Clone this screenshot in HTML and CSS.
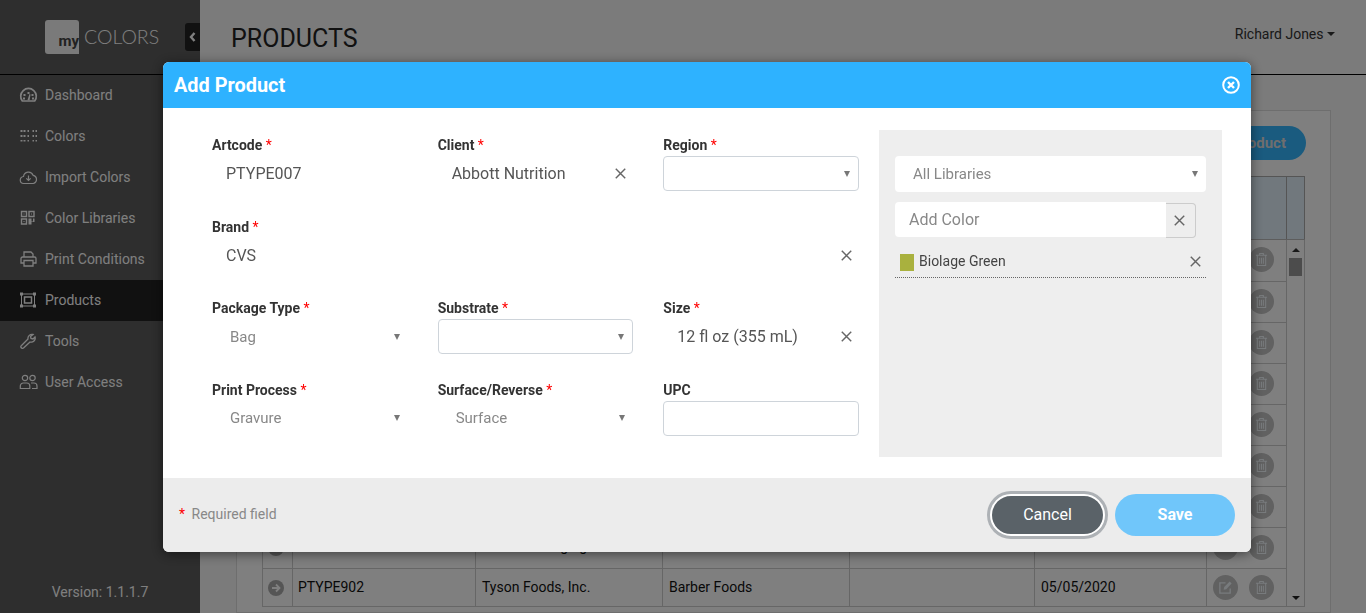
FILE: index.html
```html
<!DOCTYPE html>
<html lang="en">
<head>
<meta charset="utf-8" />
<title>myColors - Products</title>
<link rel="stylesheet" href="styles.css">
</head>
<body>

<svg class="defs" width="0" height="0">
    <symbol id="trash" viewBox="0 0 14 16">
        <path d="M1 3.500h12M5 3.500V1.500h4v2M2.500 3.500v11h9v-11M5 6v6.500M7 6v6.500M9 6v6.500" fill="none" stroke="currentColor" stroke-width="1.100"/>
    </symbol>
    <symbol id="edit" viewBox="0 0 16 16">
        <path d="M13 9v5H2V3h6" fill="none" stroke="currentColor" stroke-width="1.400"/>
        <path d="M6 10.500l.6-3L12.500 1.600l2 2L8.800 9.800z" fill="currentColor"/>
    </symbol>
    <symbol id="clear" viewBox="0 0 10 10">
        <path d="M.7.7l8.600 8.600M9.300.7L.7 9.300" fill="none" stroke="currentColor" stroke-width="1.300"/>
    </symbol>
</svg>

<div class="app">

    <!-- sidebar: -->
    <aside class="sidebar">
        <div class="brand">
            <div class="logo-box">my</div>
            <div class="logo-name">COLORS</div>
            <div class="collapse">
                <svg width="7" height="10" viewBox="0 0 7 10"><path d="M5.500 1L2 5l3.500 4" fill="none" stroke="#fff" stroke-width="2.400"/></svg>
            </div>
        </div>
        <ul class="nav">
            <li>
                <svg class="nav-ico" viewBox="0 0 18 16"><path d="M2.800 14a7.800 7.800 0 1 1 12.400 0z" fill="none" stroke="currentColor" stroke-width="1.700"/><path d="M8 5h2v2H8zM4 7h2v2H4zM12 7h2v2h-2zM3.500 10.500h2v2h-2zM12.500 10.500h2v2h-2zM8 13l2-6 1 .4-1 6z" fill="currentColor"/></svg>
                Dashboard
            </li>
            <li>
                <svg class="nav-ico" viewBox="0 0 18 16" fill="currentColor"><rect x="1" y="2" width="2" height="2"/><rect x="4" y="2" width="2" height="2"/><rect x="8" y="2" width="1.500" height="2"/><rect x="13" y="2" width="1.500" height="2"/><rect x="16" y="2" width="1.500" height="2"/><rect x="1" y="7" width="2" height="2"/><rect x="4" y="7" width="2" height="2"/><rect x="8" y="7" width="1.500" height="2"/><rect x="13" y="7" width="1.500" height="2"/><rect x="16" y="7" width="1.500" height="2"/><rect x="1" y="12" width="2" height="1.500"/><rect x="4" y="12" width="2" height="1.500"/><rect x="8" y="12" width="1.500" height="1.500"/><rect x="13" y="12" width="1.500" height="1.500"/><rect x="16" y="12" width="1.500" height="1.500"/></svg>
                Colors
            </li>
            <li>
                <svg class="nav-ico" viewBox="0 0 18 16"><path d="M4.500 14.500a3.500 3.500 0 0 1-.5-7 5 5 0 0 1 9.600-1.200 4.200 4.200 0 0 1 .2 8.200z M9 6.500v5M6.800 9.300L9 11.500l2.200-2.200" fill="none" stroke="currentColor" stroke-width="1.200"/></svg>
                Import Colors
            </li>
            <li>
                <svg class="nav-ico" viewBox="0 0 18 16"><path d="M2 1.500h5v5H2zM9.500 1.500h5v5h-5zM2 9h5v5H2z" fill="none" stroke="currentColor" stroke-width="1.400"/><path d="M4 3.500h1v1H4zM11.500 3.500h1v1h-1zM4 11h1v1H4zM9 8.500h3v3h1.500v-3H15v3.500h-3v2.500H9z" fill="currentColor"/></svg>
                Color Libraries
            </li>
            <li>
                <svg class="nav-ico" viewBox="0 0 18 16"><path d="M4.500 6V1h7l2 2v3M4.500 12H1.500V7.500A1.500 1.500 0 0 1 3 6h12a1.500 1.500 0 0 1 1.500 1.500V12h-3M4.500 9.500h9v5.500h-9z" fill="none" stroke="currentColor" stroke-width="1.300"/></svg>
                Print Conditions
            </li>
            <li class="active">
                <svg class="nav-ico" viewBox="0 0 18 16"><path d="M2 2h13v12H2z" fill="none" stroke="currentColor" stroke-width="1"/><path d="M5 5h7v6H5z" fill="none" stroke="currentColor" stroke-width="1.500"/><path d="M.5.5h3v3h-3zM13.500.5h3v3h-3zM.5 12.500h3v3h-3zM13.500 12.500h3v3h-3z" fill="currentColor"/></svg>
                Products
            </li>
            <li>
                <svg class="nav-ico" viewBox="0 0 18 16"><path d="M2 12.500l6.500-6.500a4 4 0 0 1 5-4.500l-2.500 2 .5 2 2 .5 2-2a4 4 0 0 1-5 5L4 15a1.400 1.400 0 0 1-2-2.500z" fill="none" stroke="currentColor" stroke-width="1.300"/></svg>
                Tools
            </li>
            <li>
                <svg class="nav-ico" viewBox="0 0 18 16"><circle cx="5.500" cy="4" r="2.700" fill="none" stroke="currentColor" stroke-width="1.200"/><circle cx="13" cy="4" r="2.700" fill="none" stroke="currentColor" stroke-width="1.200"/><path d="M.8 14.500v-2.500a3 3 0 0 1 3-3h3.500a3 3 0 0 1 3 3v2.500zM11.500 9h3a3 3 0 0 1 3 3v2.500h-5" fill="none" stroke="currentColor" stroke-width="1.200"/></svg>
                User Access
            </li>
        </ul>
        <div class="version">Version: 1.1.1.7</div>
    </aside>

    <!-- page behind the modal: -->
    <main class="main">
        <header class="topbar">
            <h1>PRODUCTS</h1>
            <div class="user">Richard Jones <span class="caret"></span></div>
        </header>
        <section class="card">
            <div class="card-tools"><button class="btn-add">Add Product</button></div>
            <table class="grid">
                <colgroup>
                    <col class="c-go"><col class="c-code"><col class="c-client"><col class="c-brand"><col class="c-type"><col class="c-date"><col class="c-act"><col class="c-scroll">
                </colgroup>
                <tr class="head"><th></th><th></th><th></th><th></th><th></th><th></th><th></th><th></th></tr>
                <tr class="first">
                    <td></td><td></td><td></td><td></td><td></td><td></td>
                    <td class="act"><span class="round"></span><span class="round"><svg class="i-trash"><use href="#trash"/></svg></span></td>
                    <td class="scroll" rowspan="8">
                        <div class="scroll-box"><span class="up"></span><span class="thumb"></span></div>
                    </td>
                </tr>
                <tr><td></td><td></td><td></td><td></td><td></td><td></td><td class="act"><span class="round"></span><span class="round"><svg class="i-trash"><use href="#trash"/></svg></span></td></tr>
                <tr><td></td><td></td><td></td><td></td><td></td><td></td><td class="act"><span class="round"></span><span class="round"><svg class="i-trash"><use href="#trash"/></svg></span></td></tr>
                <tr><td></td><td></td><td></td><td></td><td></td><td></td><td class="act"><span class="round"></span><span class="round"><svg class="i-trash"><use href="#trash"/></svg></span></td></tr>
                <tr><td></td><td></td><td></td><td></td><td></td><td></td><td class="act"><span class="round"></span><span class="round"><svg class="i-trash"><use href="#trash"/></svg></span></td></tr>
                <tr><td></td><td></td><td></td><td></td><td></td><td></td><td class="act"><span class="round"></span><span class="round"><svg class="i-trash"><use href="#trash"/></svg></span></td></tr>
                <tr><td></td><td></td><td></td><td></td><td></td><td></td><td class="act"><span class="round"></span><span class="round"><svg class="i-trash"><use href="#trash"/></svg></span></td></tr>
                <tr>
                    <td class="go-cell"><span class="go"><svg width="10" height="10" viewBox="0 0 10 10"><path d="M1 5h7M5 1.500L8.500 5 5 8.500" fill="none" stroke="#fff" stroke-width="1.800"/></svg></span></td>
                    <td></td><td>Smith Packaging</td><td></td><td></td><td></td>
                    <td class="act"><span class="round"></span><span class="round"><svg class="i-trash"><use href="#trash"/></svg></span></td>
                </tr>
                <tr class="last">
                    <td class="go-cell"><span class="go"><svg width="10" height="10" viewBox="0 0 10 10"><path d="M1 5h7M5 1.500L8.500 5 5 8.500" fill="none" stroke="#fff" stroke-width="1.800"/></svg></span></td>
                    <td class="code">PTYPE902</td><td>Tyson Foods, Inc.</td><td>Barber Foods</td><td></td><td>05/05/2020</td>
                    <td class="act"><span class="round"><svg class="i-edit"><use href="#edit"/></svg></span><span class="round"><svg class="i-trash"><use href="#trash"/></svg></span></td>
                    <td class="scroll-end"><span class="down"></span></td>
                </tr>
            </table>
        </section>
    </main>
</div>

<div class="backdrop"></div>

<!-- modal: -->
<div class="modal">
    <div class="modal-head">
        <h2>Add Product</h2>
        <svg class="modal-close" width="18" height="18" viewBox="0 0 18 18"><circle cx="9" cy="9" r="7.800" fill="none" stroke="#fff" stroke-width="2"/><path d="M6 6l6 6M12 6l-6 6" fill="none" stroke="#fff" stroke-width="2.400"/></svg>
    </div>

    <div class="modal-body">
        <div class="form">
            <div class="field">
                <label>Artcode <i>*</i></label>
                <div class="value">PTYPE007</div>
            </div>
            <div class="field">
                <label>Client <i>*</i></label>
                <div class="value">Abbott Nutrition <svg class="x"><use href="#clear"/></svg></div>
            </div>
            <div class="field">
                <label>Region <i>*</i></label>
                <div class="select boxed"></div>
            </div>
            <div class="field wide">
                <label>Brand <i>*</i></label>
                <div class="value">CVS <svg class="x"><use href="#clear"/></svg></div>
            </div>
            <div class="field">
                <label>Package Type <i>*</i></label>
                <div class="select">Bag</div>
            </div>
            <div class="field">
                <label>Substrate <i>*</i></label>
                <div class="select boxed"></div>
            </div>
            <div class="field">
                <label>Size <i>*</i></label>
                <div class="value">12 fl oz (355 mL) <svg class="x"><use href="#clear"/></svg></div>
            </div>
            <div class="field">
                <label>Print Process <i>*</i></label>
                <div class="select">Gravure</div>
            </div>
            <div class="field">
                <label>Surface/Reverse <i>*</i></label>
                <div class="select">Surface</div>
            </div>
            <div class="field">
                <label>UPC</label>
                <div class="input"></div>
            </div>
        </div>

        <div class="colors">
            <div class="select lib">All Libraries</div>
            <div class="add-color">
                <div class="add-input">Add Color</div>
                <div class="add-btn"><svg class="x"><use href="#clear"/></svg></div>
            </div>
            <div class="color-row">
                <span class="swatch"></span>
                <span class="color-name">Biolage Green</span>
                <svg class="x"><use href="#clear"/></svg>
            </div>
        </div>
    </div>

    <div class="modal-foot">
        <div class="req"><i>*</i> Required field</div>
        <div class="foot-btns">
            <button class="btn-cancel">Cancel</button>
            <button class="btn-save">Save</button>
        </div>
    </div>
</div>

</body>
</html>
```

FILE: styles.css
```css
* { box-sizing: border-box; }

html, body {
    margin: 0;
    height: 613px;
    overflow: hidden;
    font-family: Roboto, "Liberation Sans", sans-serif;
    font-size: 14px;
}

.defs { display: block; }

.app {
    display: flex;
    height: 613px;
}

/* sidebar: */
.sidebar {
    width: 200px;
    flex: none;
    display: flex;
    flex-direction: column;
    background: #5c5c5c;
    color: #fff;
}
.brand {
    height: 75px;
    flex: none;
    display: flex;
    align-items: center;
    padding: 0 0 1px 45px;
    border-bottom: 1px solid #000;
}
.logo-box {
    width: 34px;
    height: 34px;
    display: flex;
    align-items: flex-end;
    justify-content: flex-end;
    padding-bottom: 4px;
    background: #f4f4f4;
    border-radius: 3px 3px 0 3px;
    color: #444;
    font-weight: 700;
    font-size: 15px;
    line-height: 17px;
}
.logo-name {
    margin-left: 5px;
    font-family: Lato, sans-serif;
    font-weight: 300;
    font-size: 19.500px;
    color: #fff;
}
.collapse {
    margin-left: auto;
    width: 15px;
    height: 28px;
    display: flex;
    align-items: center;
    justify-content: center;
    background: #222;
    border-radius: 3px 0 0 3px;
}

.nav {
    list-style: none;
    margin: 0;
    padding: 0;
}
.nav li {
    height: 41px;
    display: flex;
    align-items: center;
    padding: 0 0 2px 19px;
}
.nav li.active { background: #222; }
.nav-ico {
    width: 19px;
    height: 16px;
    margin-right: 7px;
    flex: none;
}
.version {
    margin-top: auto;
    padding-bottom: 13px;
    text-align: center;
}

/* page behind the modal: */
.main {
    flex: 1;
    min-width: 0;
    display: flex;
    flex-direction: column;
    background: #f6f6f6;
}
.topbar {
    height: 75px;
    flex: none;
    display: flex;
    justify-content: space-between;
    padding: 0 31px 0 31px;
    border-bottom: 1px solid #000;
}
.topbar h1 {
    margin: 24px 0 0;
    font-size: 25px;
    line-height: 30px;
    font-weight: 400;
    color: #222;
}
.user {
    margin-top: 26px;
    line-height: 16px;
    color: #333;
}
.caret {
    display: inline-block;
    vertical-align: 3px;
    border-top: 4px solid #333;
    border-left: 4px solid transparent;
    border-right: 4px solid transparent;
}

.card {
    height: 503px;
    flex: none;
    margin: 35px 35px 0 36px;
    padding: 15px 24px 0 25px;
    background: #fff;
    border: 1px solid #ddd;
}
.card-tools {
    display: flex;
    justify-content: flex-end;
    margin-bottom: 16px;
}
.btn-add {
    height: 34px;
    padding: 0 20px;
    border: 0;
    border-radius: 17px;
    background: #34b6ff;
    color: #ddd;
    font: 700 15px Roboto, sans-serif;
}

.grid {
    width: 1043px;
    table-layout: fixed;
    border-collapse: collapse;
    border: 1px solid #aaa;
    color: #111;
}
.c-go { width: 30px; }
.c-code { width: 183px; }
.c-client { width: 187px; }
.c-brand { width: 187px; }
.c-type { width: 185px; }
.c-date { width: 172px; }
.c-act { width: 80px; }
.grid th, .grid td {
    border: 1px solid #ccc;
    padding: 10px 6px 0;
    height: 41px;
    line-height: 16px;
    text-align: left;
    vertical-align: top;
}
.grid .head th {
    height: 63px;
    background: #e2f1fb;
    border-color: #aaa;
    border-bottom-color: #bbb;
}
.grid .first td { height: 42px; }
.grid .last td { height: 38px; }
.grid td.code { padding-left: 5px; }
.grid td.act {
    padding-top: 0;
    padding-bottom: 2px;
    vertical-align: middle;
}
.grid td.go-cell {
    padding-top: 0;
    vertical-align: middle;
}
.grid .last td.act { padding-bottom: 0; }
.act { white-space: nowrap; }
.act .round + .round { margin-left: 11px; }
.round {
    display: inline-flex;
    align-items: center;
    justify-content: center;
    width: 25px;
    height: 25px;
    border-radius: 50%;
    background: #c2c2c2;
    vertical-align: middle;
}
.i-trash { width: 13px; height: 15px; color: #f0f6fb; }
.i-edit { width: 15px; height: 15px; color: #f0f6fb; }
.go {
    display: flex;
    align-items: center;
    justify-content: center;
    width: 16px;
    height: 16px;
    margin-left: -1px;
    border-radius: 50%;
    background: #aaa;
}
.grid td.scroll {
    padding: 0;
    vertical-align: top;
    border-bottom: 0;
}
.grid td.scroll-end {
    padding: 0 0 3px;
    vertical-align: bottom;
    text-align: center;
    border-top: 0;
}
.scroll-box {
    display: flex;
    flex-direction: column;
    align-items: center;
    padding-top: 8px;
}
.up {
    display: block;
    border-bottom: 4px solid #333;
    border-left: 4px solid transparent;
    border-right: 4px solid transparent;
}
.down {
    display: inline-block;
    border-top: 4px solid #222;
    border-left: 4px solid transparent;
    border-right: 4px solid transparent;
}
.thumb {
    display: block;
    width: 13px;
    height: 18px;
    margin-top: 6px;
    background: #999;
}

.backdrop {
    position: fixed;
    inset: 0;
    background: rgba(0, 0, 0, .5);
}

/* modal: */
.modal {
    position: fixed;
    left: 163px;
    top: 62px;
    width: 1088px;
    height: 490px;
    display: flex;
    flex-direction: column;
    background: #fff;
    border-radius: 6px;
    overflow: hidden;
    box-shadow: 0 2px 12px rgba(0, 0, 0, .5);
}
.modal-head {
    height: 46px;
    flex: none;
    display: flex;
    align-items: center;
    justify-content: space-between;
    padding: 0 11px;
    background: #2eb2ff;
    color: #fff;
}
.modal-head h2 {
    margin: 0;
    font-size: 19.900px;
    font-weight: 700;
}

.modal-body {
    height: 370px;
    flex: none;
    display: flex;
    gap: 20px;
    padding: 22px 29px 21px 49px;
}
.form {
    width: 647px;
    flex: none;
    padding-top: 4px;
    display: grid;
    grid-template-columns: repeat(3, 1fr);
    grid-auto-rows: 81.670px;
    column-gap: 30px;
}
.field.wide { grid-column: 1 / 4; }
.field label {
    display: block;
    height: 22px;
    line-height: 22px;
    font-weight: 700;
    color: #333;
}
.field label i, .req i {
    font-style: normal;
    font-weight: 400;
    color: #f00;
}
.value {
    height: 35px;
    display: flex;
    align-items: center;
    justify-content: space-between;
    padding: 0 7px 0 14px;
    font-size: 16px;
    color: #555;
}
.x {
    width: 11px;
    height: 11px;
    flex: none;
    color: #666;
}
.select {
    height: 35px;
    display: flex;
    align-items: center;
    justify-content: space-between;
    padding: 0 8px 0 18px;
    font-size: 15px;
    color: #888;
}
.select::after {
    content: "";
    margin-left: auto;
    border-top: 6px solid #777;
    border-left: 3px solid transparent;
    border-right: 3px solid transparent;
}
.boxed, .input {
    background: #fff;
    border: 1px solid #ced4da;
    border-radius: 4px;
}
.input { height: 35px; }

.colors {
    flex: 1;
    padding: 26px 16px;
    background: #eee;
}
.select.lib {
    height: 36px;
    background: #fff;
    border-radius: 4px;
    font-size: 15px;
}
.add-color {
    display: flex;
    width: 301px;
    margin-top: 10px;
}
.add-input {
    flex: 1;
    height: 35px;
    display: flex;
    align-items: center;
    padding-left: 14px;
    background: #fff;
    border-radius: 4px 0 0 4px;
    font-size: 16px;
    color: #888;
}
.add-btn {
    width: 30px;
    height: 35px;
    margin-top: 1px;
    display: flex;
    align-items: center;
    justify-content: center;
    padding-right: 3px;
    border: 1px solid #ccc;
    border-left: 0;
    border-radius: 0 4px 4px 0;
}
.color-row {
    height: 40px;
    display: flex;
    align-items: center;
    padding: 7px 5px 0 5px;
    border-bottom: 1px dotted #666;
}
.swatch {
    width: 14px;
    height: 17px;
    margin-top: 2px;
    background: #a9b13e;
    margin-right: 5px;
}
.color-name {
    flex: 1;
    color: #444;
}

.modal-foot {
    height: 74px;
    flex: none;
    display: flex;
    align-items: center;
    justify-content: space-between;
    padding: 0 16px;
    background: #ececec;
}
.req { color: #888; padding-bottom: 2px; }
.req i { margin-right: 3px; }
.foot-btns {
    display: flex;
    align-items: center;
    gap: 10px;
}
.btn-cancel, .btn-save {
    height: 42px;
    padding: 0 0 2px;
    border-radius: 21px;
    color: #fff;
    font: 400 16px Roboto, sans-serif;
}
.btn-cancel {
    width: 115px;
    background: #5a6268;
    border: 2px solid #fff;
    box-shadow: 0 0 0 3px #adb1b5;
}
.btn-save {
    width: 120px;
    background: #70c6fa;
    border: 0;
    font-weight: 700;
}
```
